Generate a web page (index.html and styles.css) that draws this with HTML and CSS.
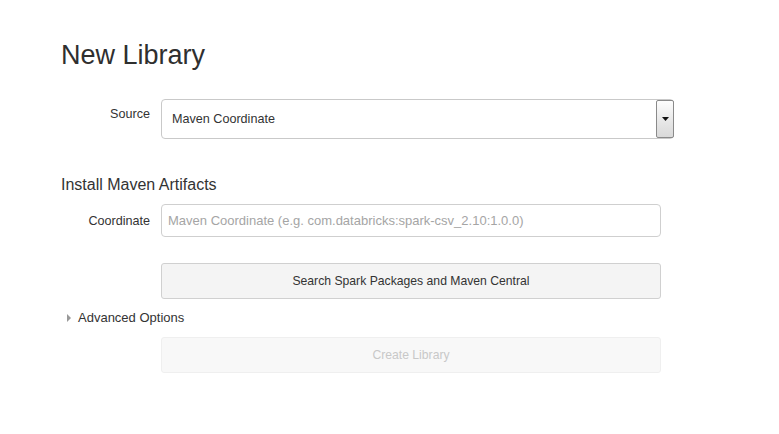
FILE: index.html
```html
<!DOCTYPE html>
<html>
<head>
<meta charset="utf-8">
<link rel="stylesheet" href="styles.css">
</head>
<body>
<div class="page">
  <h1 class="title">New Library</h1>
  <div class="row row-source">
    <label class="label label-source">Source</label>
    <div class="select">
      <span class="select-text">Maven Coordinate</span>
      <span class="select-btn"><svg width="7" height="4" viewBox="0 0 7 4"><path d="M0 0H7L3.5 4Z" fill="#111"/></svg></span>
    </div>
  </div>
  <h2 class="section">Install Maven Artifacts</h2>
  <div class="row row-coord">
    <label class="label">Coordinate</label>
    <div class="input"><span class="placeholder">Maven Coordinate (e.g. com.databricks:spark-csv_2.10:1.0.0)</span></div>
  </div>
  <div class="row row-search">
    <div class="btn btn-search">Search Spark Packages and Maven Central</div>
  </div>
  <div class="advanced"><span class="caret"></span>Advanced Options</div>
  <div class="row row-create">
    <div class="btn btn-create">Create Library</div>
  </div>
</div>
</body>
</html>
```
FILE: styles.css
```css
html, body {
  margin: 0;
  padding: 0;
  background: #fff;
}
body {
  font-family: "Liberation Sans", Arial, sans-serif;
  color: #333;
  font-size: 13px;
}
.page {
  padding: 40px 0 0 61px;
}
.title {
  margin: 0;
  font-size: 27px;
  font-weight: normal;
  line-height: 31px;
  color: #2f2f2f;
}
.row {
  display: flex;
  align-items: center;
  padding-left: 100px;
}
.label {
  width: 89px;
  margin-left: -100px;
  margin-right: 11px;
  text-align: right;
  color: #333;
  font-size: 12.6px;
}
.row-source {
  margin-top: 28px;
  align-items: flex-start;
}
.label-source {
  padding-top: 8px;
}
.select {
  box-sizing: border-box;
  width: 513px;
  height: 40px;
  border: 1px solid #c9c9c9;
  border-radius: 4px;
  display: flex;
  align-items: stretch;
}
.select-text {
  flex: 1;
  padding-left: 10px;
  display: flex;
  align-items: center;
  font-size: 12.6px;
  color: #333;
}
.select-btn {
  box-sizing: border-box;
  width: 18px;
  margin-right: -1px;
  border: 1px solid #8a8a8a;
  border-radius: 2px;
  background: linear-gradient(#fdfdfd, #e6e6e6 60%, #d9d9d9);
  display: flex;
  align-items: center;
  justify-content: center;
}
.section {
  margin: 36px 0 0 0;
  font-size: 16px;
  font-weight: normal;
  line-height: 20px;
  color: #333;
}
.row-coord {
  margin-top: 9px;
}
.input {
  box-sizing: border-box;
  width: 500px;
  height: 33px;
  border: 1px solid #cfcfcf;
  border-radius: 4px;
  display: flex;
  align-items: center;
  padding-left: 6px;
}
.placeholder {
  color: #a5a5a5;
}
.row-search {
  margin-top: 26px;
}
.btn {
  box-sizing: border-box;
  width: 500px;
  height: 36px;
  border-radius: 3px;
  display: flex;
  align-items: center;
  justify-content: center;
  font-size: 12.2px;
}
.btn-search {
  background: #f4f4f4;
  border: 1px solid #d0d0d0;
  color: #333;
}
.advanced {
  margin-top: 10px;
  display: flex;
  align-items: center;
  line-height: 18px;
  font-size: 13px;
  color: #333;
  padding-left: 6px;
}
.caret {
  width: 0;
  height: 0;
  border-top: 4px solid transparent;
  border-bottom: 4px solid transparent;
  border-left: 4px solid #999;
  margin-right: 7px;
}
.row-create {
  margin-top: 10px;
}
.btn-create {
  background: #f8f8f8;
  border: 1px solid #efefef;
  color: #c8c8c8;
}
```
